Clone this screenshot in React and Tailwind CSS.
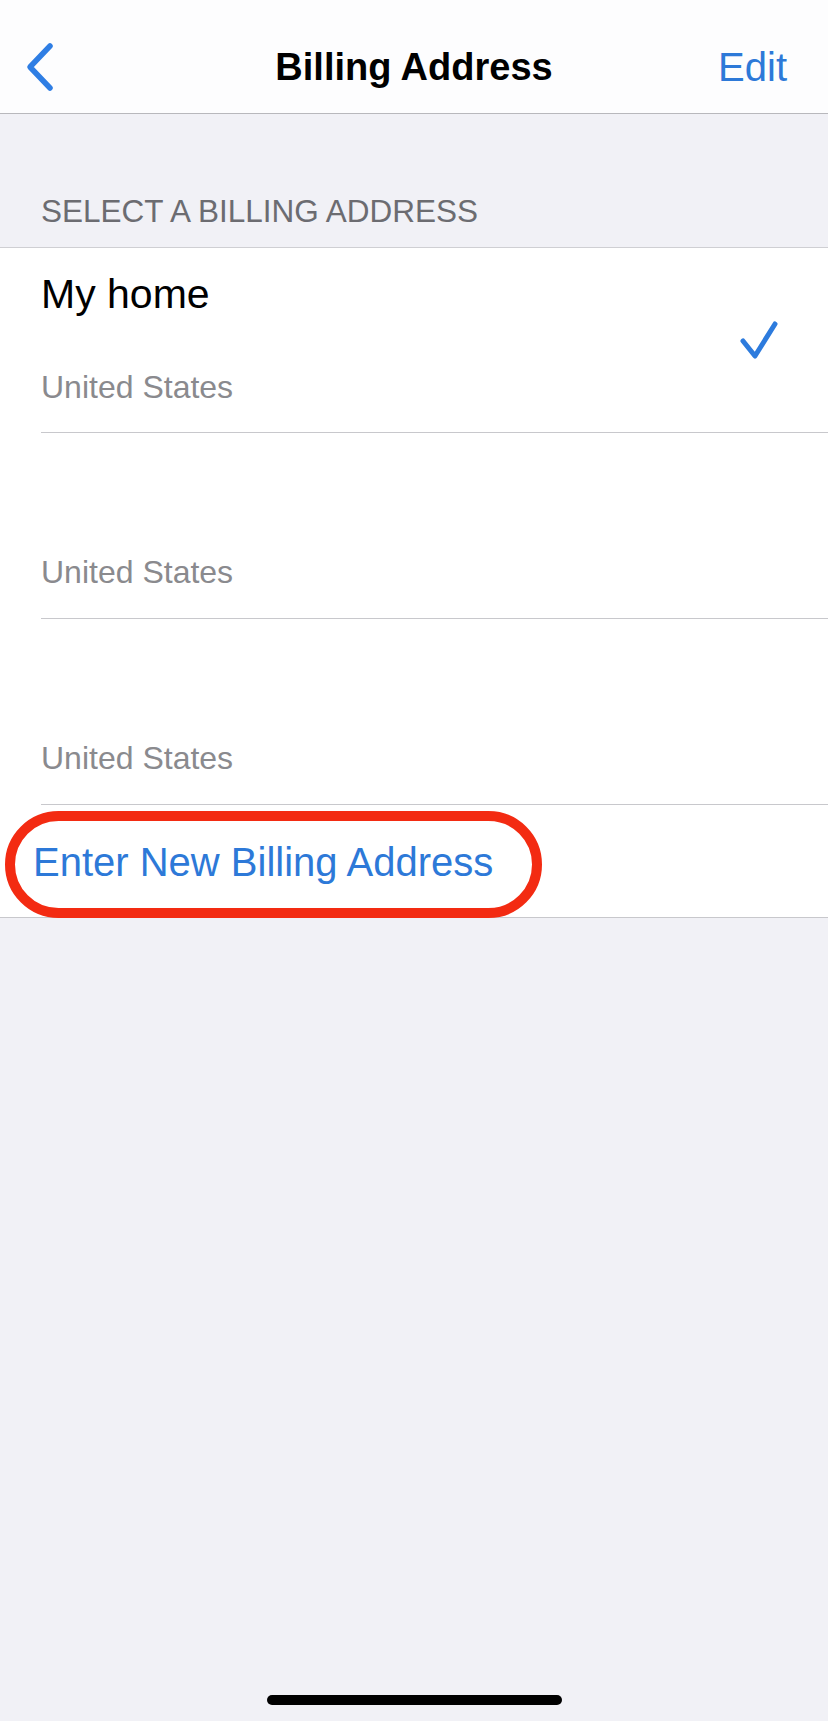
import React from "react";

const font = { fontFamily: '"Liberation Sans", Arial, sans-serif' };

function Chevron() {
  return (
    <svg width="32" height="52" viewBox="0 0 32 52" className="ml-[24px]">
      <path d="M26 5 L6 26 L26 47" fill="none" stroke="#2f7ee4" strokeWidth="5.5" strokeLinecap="round" strokeLinejoin="round" />
    </svg>
  );
}

function Check() {
  return (
    <svg width="40" height="40" viewBox="0 0 40 40">
      <path d="M3 21 L15 36 L35 4" fill="none" stroke="#2d7bdd" strokeWidth="5" strokeLinecap="round" strokeLinejoin="round" />
    </svg>
  );
}

export default function App() {
  return (
    <div className="min-h-[1721px] w-[828px] bg-[#f1f1f6] flex flex-col" style={font}>
      {/* Nav bar */}
      <div className="h-[114px] pt-[20px] bg-[#fdfdfe] border-b border-[#b8b8bc] grid grid-cols-[1fr_auto_1fr] items-center">
        <div className="flex items-center">
          <Chevron />
        </div>
        <div className="text-[38px] font-bold text-black leading-[48px]">Billing Address</div>
        <div className="flex justify-end pr-[41px] text-[40px] text-[#2d79d8] leading-[48px]">Edit</div>
      </div>

      {/* Section header */}
      <div className="h-[134px] flex items-end pb-[16px] pl-[41px] border-b border-[#cfcfd3]">
        <div className="text-[31.5px] text-[#6c6c71] leading-[40px]">SELECT A BILLING ADDRESS</div>
      </div>

      {/* List */}
      <div className="bg-white">
        <div className="pl-[41px]">
          <div className="h-[185px] border-b border-[#c8c8cc] flex items-center justify-between pr-[48px]">
            <div className="h-full flex flex-col justify-between pt-[22px] pb-[25px]">
              <div className="text-[41px] text-black leading-[48px]">My home</div>
              <div className="text-[32px] text-[#8a8a8e] leading-[40px]">United States</div>
            </div>
            <Check />
          </div>
          <div className="h-[186px] border-b border-[#c8c8cc] flex flex-col justify-end pb-[26px]">
            <div className="text-[32px] text-[#8a8a8e] leading-[40px]">United States</div>
          </div>
          <div className="h-[186px] border-b border-[#c8c8cc] flex flex-col justify-end pb-[26px]">
            <div className="text-[32px] text-[#8a8a8e] leading-[40px]">United States</div>
          </div>
        </div>
        <div className="relative h-[113px] border-b border-[#c8c8cc] flex items-center pl-[33px]">
          <div className="text-[40px] text-[#2d79d8] leading-[48px] pt-[2px]">Enter New Billing Address</div>
          <div className="absolute left-[5px] top-[6px] w-[537px] h-[107px] rounded-full border-[10px] border-[#f32b12]" />
        </div>
      </div>

      <div className="flex-1" />
      <div className="flex justify-center pb-[16px]">
        <div className="w-[295px] h-[10px] rounded-full bg-black" />
      </div>
    </div>
  );
}
